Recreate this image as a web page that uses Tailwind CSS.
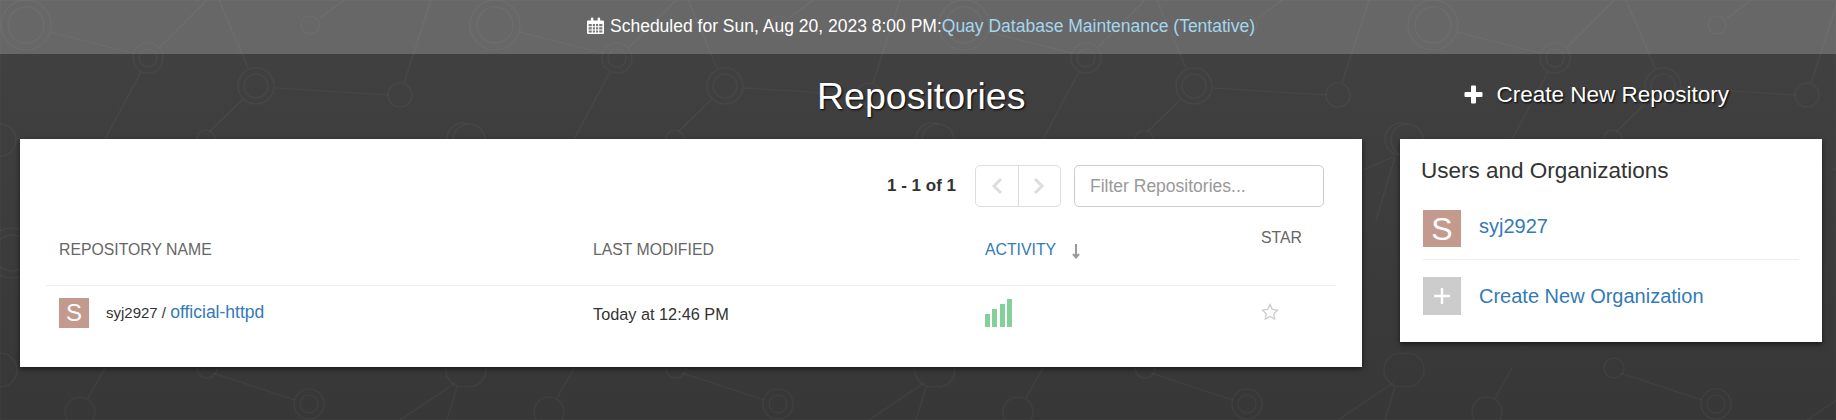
<!DOCTYPE html>
<html lang="en">

<head>
	<meta charset="UTF-8">
	<title>Repositories</title>
	<script src="https://cdn.jsdelivr.net/npm/@tailwindcss/browser@4"></script>
</head>

<body class="relative h-[420px] w-[1836px] overflow-hidden bg-[linear-gradient(#424242,#373737)] font-['Liberation_Sans',Arial,sans-serif] text-[14px] text-[#333]">

	<!-- Network pattern behind the page -->
	<svg class="absolute inset-0" width="1836" height="420" fill="none" stroke="#ffffff" stroke-opacity="0.04" stroke-width="1.2">
		<defs>
			<pattern id="net" width="469" height="420" patternUnits="userSpaceOnUse">
				<circle cx="26" cy="25" r="25" /><circle cx="26" cy="25" r="18" />
				<circle cx="148" cy="58" r="15" /><circle cx="148" cy="58" r="9" />
				<circle cx="256" cy="86" r="18" /><circle cx="256" cy="86" r="12" />
				<circle cx="400" cy="95" r="12" />
				<circle cx="310" cy="25" r="9" />
				<circle cx="206" cy="139" r="9" />
				<circle cx="463" cy="139" r="16" />
				<circle cx="0" cy="140" r="16" /><circle cx="469" cy="140" r="16" />
				<circle cx="12" cy="253" r="25" /><circle cx="12" cy="253" r="18" />
				<circle cx="207" cy="368" r="10" />
				<circle cx="309" cy="404" r="15" /><circle cx="309" cy="404" r="9" />
				<circle cx="80" cy="412" r="15" />
				<circle cx="463" cy="370" r="17" /><circle cx="0" cy="370" r="17" />
				<path d="M50 32 133 53M160 47 207 0M219 0 248 68M141 72 105 139M275 88 389 95M404 83 431 0M242 100 209 132M320 18 344 0" />
				<path d="M105 368 88 398M213 373 295 400M455 383 400 420M457 387 447 420M455 157 425 170M457 157 438 220" />
			</pattern>
		</defs>
		<rect width="1836" height="420" fill="url(#net)" />
	</svg>

	<div class="relative">
		<!-- Announcement bar -->
		<div class="flex h-[54px] items-center justify-center bg-white/20 pb-[2px] pl-[6px] text-[17.500px] text-white">
			<svg class="mr-[6px]" width="17" height="18" viewBox="0 0 16 18" preserveAspectRatio="none">
				<path fill="#fff" d="M1 3.500h2.600V1.600a1.200 1.200 0 0 1 2.400 0v1.900h4V1.600a1.200 1.200 0 0 1 2.400 0v1.900H15a1 1 0 0 1 1 1V16a1 1 0 0 1-1 1H1a1 1 0 0 1-1-1V4.500a1 1 0 0 1 1-1z" />
				<path fill="#777" d="M1.500 7h3v2.300h-3zM5.500 7h2v2.300h-2zM8.500 7h2v2.300h-2zM11.500 7h3v2.300h-3zM1.500 10.200h3v2.300h-3zM5.500 10.200h2v2.300h-2zM8.500 10.200h2v2.300h-2zM11.500 10.200h3v2.300h-3zM1.500 13.400h3v2.200h-3zM5.500 13.400h2v2.200h-2zM8.500 13.400h2v2.200h-2zM11.500 13.400h3v2.200h-3z" />
			</svg>
			<span>Scheduled for Sun, Aug 20, 2023 8:00 PM:</span><a class="text-[#a5d6ee]">Quay Database Maintenance (Tentative)</a>
		</div>

		<!-- Title row -->
		<div class="flex h-[85px] items-center">
			<h1 class="ml-[817px] text-[37.500px] leading-none text-white [text-shadow:1px_1px_2px_#000]">Repositories</h1>
			<a class="ml-[439px] -mt-[4px] flex items-center text-[22.500px] text-white [text-shadow:1px_1px_2px_#000]">
				<svg class="mr-[13px]" width="19" height="19" viewBox="0 0 19 19">
					<path fill="#fff" d="M7 1.500a1 1 0 0 1 1-1h3a1 1 0 0 1 1 1V7h5.500a1 1 0 0 1 1 1v3a1 1 0 0 1-1 1H12v5.500a1 1 0 0 1-1 1H8a1 1 0 0 1-1-1V12H1.500a1 1 0 0 1-1-1V8a1 1 0 0 1 1-1H7z" />
				</svg>
				Create New Repository
			</a>
		</div>

		<div class="flex items-start pl-[20px]">
			<!-- Repository list -->
			<div class="h-[228px] w-[1342px] bg-white pl-[26px] pt-[26px] shadow-[0_2px_5px_rgba(0,0,0,0.6)]">
				<div class="flex h-[42px] w-[1278px] items-center justify-end">
					<span class="mr-[19px] text-[17px] font-bold text-[#333]">1 - 1 of 1</span>
					<div class="mr-[13px] flex h-[42px] w-[86px] rounded-[5px] border border-[#ddd]">
						<div class="flex flex-1 items-center justify-center border-r border-[#ddd]">
							<svg width="12" height="18" viewBox="0 0 12 18" fill="none" stroke="#ddd" stroke-width="3"><path d="M10 2 3 9l7 7" /></svg>
						</div>
						<div class="flex flex-1 items-center justify-center">
							<svg width="12" height="18" viewBox="0 0 12 18" fill="none" stroke="#ddd" stroke-width="3"><path d="m2 2 7 7-7 7" /></svg>
						</div>
					</div>
					<input class="h-[42px] w-[250px] rounded-[5px] border border-[#ccc] px-[15px] text-[17.500px] placeholder:text-[#999]" placeholder="Filter Repositories...">
				</div>

				<table class="w-[1290px] table-fixed">
					<thead>
						<tr class="h-[78px] border-b border-[#eee] text-left text-[15.800px] font-normal text-[#666]">
							<th class="w-[533px] pl-[13px] pt-[9px] font-normal">REPOSITORY NAME</th>
							<th class="w-[393px] pl-[14px] pt-[9px] font-normal">LAST MODIFIED</th>
							<th class="w-[276px] pl-[13px] pt-[9px] font-normal">
								<span class="flex items-center text-[#337ab7]">ACTIVITY
									<svg class="ml-[15px] mt-[1px]" width="10" height="16" viewBox="0 0 10 16" fill="none" stroke="#999" stroke-width="2"><path d="M5 1v13M2 11l3 3.500L8 11" /></svg>
								</span>
							</th>
							<th class="pb-[15px] pl-[13px] font-normal">STAR</th>
						</tr>
					</thead>
					<tbody>
						<tr class="h-[56px]">
							<td class="pl-[13px]">
								<div class="flex items-center">
									<span class="mr-[17px] flex h-[30px] w-[30px] items-center justify-center bg-[#c49a8e] text-[24px] text-white">S</span>
									<span class="-mt-[3px] text-[15px] text-[#333]">syj2927 / <a class="text-[17.500px] text-[#337ab7]">official-httpd</a></span>
								</div>
							</td>
							<td class="pl-[14px] pt-[2px] text-[16.300px] text-[#333]">Today at 12:46 PM</td>
							<td class="pl-[13px]">
								<div class="flex h-[28px] items-end gap-[2.300px]">
									<i class="h-[13px] w-[5px] bg-[#84d09a]"></i>
									<i class="h-[18px] w-[5px] bg-[#84d09a]"></i>
									<i class="h-[23px] w-[5px] bg-[#84d09a]"></i>
									<i class="h-[28px] w-[5px] bg-[#84d09a]"></i>
								</div>
							</td>
							<td class="pl-[13px]">
								<svg class="-mt-[3px]" width="18" height="18" viewBox="0 0 18 18" fill="none" stroke="#ccc" stroke-width="1.300"><path d="m9 1.500 2.300 4.900 5.300.7-3.900 3.700 1 5.300L9 13.500l-4.700 2.600 1-5.300L1.400 7.100l5.300-.7z" /></svg>
							</td>
						</tr>
					</tbody>
				</table>
			</div>

			<!-- Users and organizations -->
			<div class="ml-[38px] h-[203px] w-[422px] bg-white pl-[23px] pr-[23px] pt-[21px] shadow-[0_2px_5px_rgba(0,0,0,0.6)]">
				<h3 class="ml-[-2px] text-[22.500px] leading-[22px] text-[#333]">Users and Organizations</h3>
				<div class="mt-[28px] flex h-[50px] items-start border-b border-[#eee]">
					<span class="flex h-[37px] w-[38px] items-center justify-center bg-[#c49a8e] text-[32px] text-white">S</span>
					<a class="ml-[18px] text-[20px] leading-[32px] text-[#337ab7]">syj2927</a>
				</div>
				<div class="mt-[17px] flex items-center">
					<span class="flex h-[38px] w-[38px] items-center justify-center bg-[#ccc] text-[30px] text-white">
						<svg width="16" height="16" viewBox="0 0 16 16"><path fill="#fff" d="M6.800 0h2.400v6.800H16v2.400H9.200V16H6.800V9.200H0V6.800h6.800z" /></svg>
					</span>
					<a class="ml-[18px] -mt-[1px] text-[20px] text-[#337ab7]">Create New Organization</a>
				</div>
			</div>
		</div>
	</div>

</body>

</html>
